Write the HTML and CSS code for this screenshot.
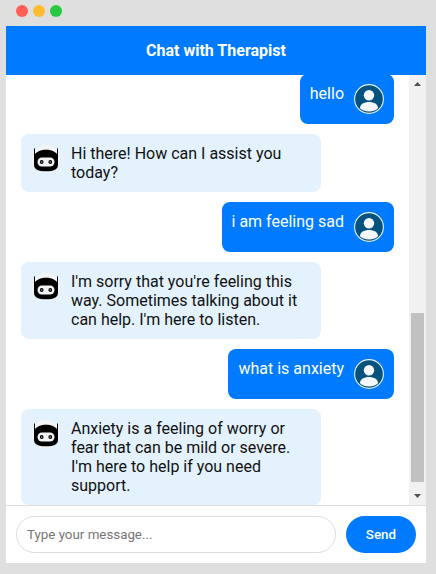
FILE: index.html
```html
<!DOCTYPE html>
<html lang="en">
<head>
<meta charset="utf-8">
<meta name="viewport" content="width=device-width, initial-scale=1">
<title>Chat with Therapist</title>
<link rel="stylesheet" href="styles.css">
</head>
<body>
<svg class="sprite" aria-hidden="true">
  <symbol id="bot" viewBox="0 0 30 30">
    <circle cx="15" cy="15" r="14" fill="#f3f4f5"/>
    <path d="M3.500 4.500v8M26.500 4.500v8" stroke="#000" stroke-width="1"/>
    <path d="M3 11.500C5.500 7.500 10 5.800 15 5.800s9.500 1.700 12 5.700v9c0 5-4 6.800-12 6.800S3 25.500 3 20.500z" fill="#000"/>
    <rect x="6.500" y="13.500" width="17" height="9" rx="4.500" fill="#f3f4f5"/>
    <circle cx="10.700" cy="18" r="1.900" fill="#000"/>
    <circle cx="19.300" cy="18" r="1.900" fill="#000"/>
    <circle cx="10.700" cy="18" r=".7" fill="#bbb"/>
    <circle cx="19.300" cy="18" r=".7" fill="#bbb"/>
  </symbol>
  <symbol id="user" viewBox="0 0 30 30">
    <circle cx="15" cy="15" r="14.400" fill="#04527d" stroke="#e8f2f8" stroke-width="1.100"/>
    <circle cx="15" cy="11.300" r="5.200" fill="#f5f8fa"/>
    <path d="M6 24.200c0-4 4-6.200 9-6.200s9 2.200 9 6.200c-2.400 2.100-5.500 3.300-9 3.300s-6.600-1.200-9-3.300z" fill="#f5f8fa"/>
  </symbol>
</svg>
<div class="window">
  <div class="titlebar">
    <span class="dot close"></span><span class="dot minimize"></span><span class="dot maximize"></span>
  </div>
  <main class="chat">
    <h1 class="chat-header">Chat with Therapist</h1>
    <div class="chat-body">
      <div class="messages">
        <div class="message from-user"><p>hello</p><svg class="avatar"><use href="#user"/></svg></div>
        <div class="message from-bot"><svg class="avatar"><use href="#bot"/></svg><p>Hi there! How can I assist you today?</p></div>
        <div class="message from-user"><p>i am feeling sad</p><svg class="avatar"><use href="#user"/></svg></div>
        <div class="message from-bot"><svg class="avatar"><use href="#bot"/></svg><p>I'm sorry that you're feeling this way. Sometimes talking about it can help. I'm here to listen.</p></div>
        <div class="message from-user"><p>what is anxiety</p><svg class="avatar"><use href="#user"/></svg></div>
        <div class="message from-bot"><svg class="avatar"><use href="#bot"/></svg><p>Anxiety is a feeling of worry or fear that can be mild or severe. I'm here to help if you need support.</p></div>
      </div>
      <div class="scrollbar" aria-hidden="true">
        <svg class="arrow" viewBox="0 0 17 17"><path d="M5 11h7L8.500 7z"/></svg>
        <div class="track"><div class="before"></div><div class="thumb"></div><div class="after"></div></div>
        <svg class="arrow" viewBox="0 0 17 17"><path d="M5 6h7l-3.500 4z"/></svg>
      </div>
    </div>
    <form class="composer">
      <input class="field" type="text" placeholder="Type your message..." aria-label="Message">
      <button class="send" type="button">Send</button>
    </form>
  </main>
</div>
</body>
</html>
```
FILE: styles.css
```css
* {
  box-sizing: border-box;
}

body {
  margin: 0;
  background: #dfdfdf;
  font-family: Roboto, sans-serif;
  font-size: 16px;
  line-height: 19px;
}

.sprite {
  position: absolute;
  width: 0;
  height: 0;
}

.window {
  display: flex;
  flex-direction: column;
  height: 100vh;
  padding: 0 10px 11px 6px;
}

.titlebar {
  display: flex;
  gap: 5px;
  flex: none;
  height: 26px;
  padding: 5px 10px;
}

.dot {
  width: 12px;
  height: 12px;
  border-radius: 50%;
}

.close { background: #ff5f57; }
.minimize { background: #ffbd2e; }
.maximize { background: #28c940; }

.chat {
  display: flex;
  flex-direction: column;
  flex: 1;
  min-height: 0;
  background: #fff;
}

.chat-header {
  margin: 0;
  padding: 15px;
  background: #007bff;
  color: #fff;
  font-size: 16px;
  font-weight: 700;
  text-align: center;
}

.chat-body {
  display: flex;
  flex: 1;
  min-height: 0;
}

.messages {
  display: flex;
  flex-direction: column;
  justify-content: flex-end;
  gap: 10px;
  flex: 1;
  padding: 0 15px;
  overflow: hidden;
}

.message {
  display: flex;
  flex: none;
  align-items: flex-start;
  gap: 10px;
  max-width: 300px;
  padding: 10px;
  border-radius: 8px;
}

.message p {
  margin: 0;
}

.from-bot {
  align-self: flex-start;
  background: #e3f2fd;
  color: #111;
}

.from-user {
  align-self: flex-end;
  background: #007bff;
  color: #fff;
}

.avatar {
  flex: none;
  width: 30px;
  height: 30px;
}

.scrollbar {
  display: flex;
  flex-direction: column;
  width: 17px;
  background: #f1f1f1;
}

.arrow {
  flex: none;
  height: 17px;
  fill: #505050;
}

.track {
  display: flex;
  flex-direction: column;
  flex: 1;
  padding: 0 2px;
}

.before { flex: 221; }
.thumb { flex: 169; background: #c1c1c1; }
.after { flex: 6; }

.composer {
  display: flex;
  gap: 10px;
  padding: 10px;
  border-top: 1px solid #ddd;
}

.field {
  flex: 1;
  min-width: 0;
  height: 37px;
  padding: 0 10px;
  border: 1px solid #ddd;
  border-radius: 20px;
  background: #fff;
  font-family: inherit;
}

.field::placeholder {
  color: #757575;
}

.send {
  height: 37px;
  padding: 0 20px;
  border: 0;
  border-radius: 20px;
  background: #007bff;
  color: #fff;
  font-family: inherit;
  font-weight: 500;
}
```
